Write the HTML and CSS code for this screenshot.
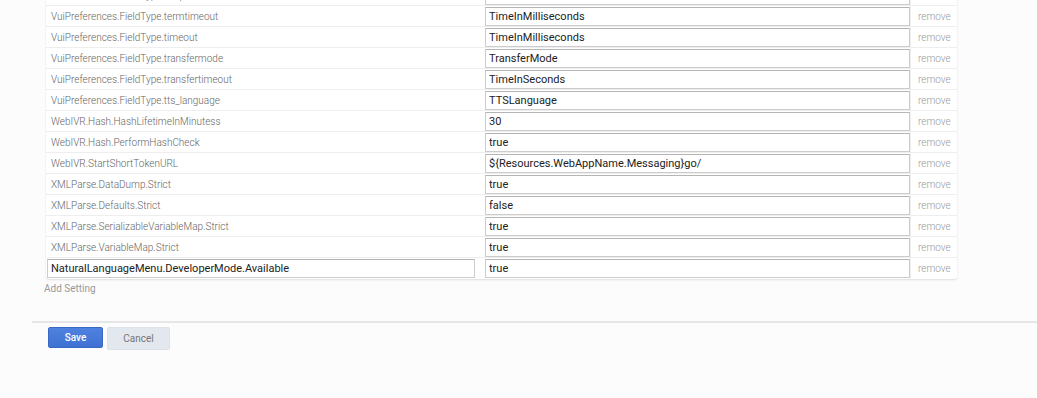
FILE: index.html
```html
<!DOCTYPE html>
<html lang="en">
<head>
    <meta charset="UTF-8">
    <title>Settings</title>
    <link rel="stylesheet" href="styles.css">
</head>
<body>
    <div class="page">
        <div class="settings">
            <div class="row"><div class="key">VuiPreferences.FieldType.telephone</div><div class="val"><input type="text" value="PhoneNumber"></div><div class="rm">remove</div></div>
            <div class="row"><div class="key">VuiPreferences.FieldType.termtimeout</div><div class="val"><input type="text" value="TimeInMilliseconds"></div><div class="rm">remove</div></div>
            <div class="row"><div class="key">VuiPreferences.FieldType.timeout</div><div class="val"><input type="text" value="TimeInMilliseconds"></div><div class="rm">remove</div></div>
            <div class="row"><div class="key">VuiPreferences.FieldType.transfermode</div><div class="val"><input type="text" value="TransferMode"></div><div class="rm">remove</div></div>
            <div class="row"><div class="key">VuiPreferences.FieldType.transfertimeout</div><div class="val"><input type="text" value="TimeInSeconds"></div><div class="rm">remove</div></div>
            <div class="row"><div class="key">VuiPreferences.FieldType.tts_language</div><div class="val"><input type="text" value="TTSLanguage"></div><div class="rm">remove</div></div>
            <div class="row"><div class="key">WebIVR.Hash.HashLifetimeInMinutess</div><div class="val"><input type="text" value="30"></div><div class="rm">remove</div></div>
            <div class="row"><div class="key">WebIVR.Hash.PerformHashCheck</div><div class="val"><input type="text" value="true"></div><div class="rm">remove</div></div>
            <div class="row"><div class="key">WebIVR.StartShortTokenURL</div><div class="val"><input type="text" value="${Resources.WebAppName.Messaging}go/"></div><div class="rm">remove</div></div>
            <div class="row"><div class="key">XMLParse.DataDump.Strict</div><div class="val"><input type="text" value="true"></div><div class="rm">remove</div></div>
            <div class="row"><div class="key">XMLParse.Defaults.Strict</div><div class="val"><input type="text" value="false"></div><div class="rm">remove</div></div>
            <div class="row"><div class="key">XMLParse.SerializableVariableMap.Strict</div><div class="val"><input type="text" value="true"></div><div class="rm">remove</div></div>
            <div class="row"><div class="key">XMLParse.VariableMap.Strict</div><div class="val"><input type="text" value="true"></div><div class="rm">remove</div></div>
            <div class="row last"><div class="key"><input type="text" value="NaturalLanguageMenu.DeveloperMode.Available"></div><div class="val"><input type="text" value="true"></div><div class="rm">remove</div></div>
        </div>
        <a class="add" href="#">Add Setting</a>
        <div class="footer">
            <button class="save">Save</button>
            <button class="cancel">Cancel</button>
        </div>
    </div>
</body>
</html>
```

FILE: styles.css
```css
body {
    margin: 0;
    background: #fcfcfc;
    font-family: Roboto, 'Liberation Sans', sans-serif;
    overflow: hidden;
}

.page {
    padding-left: 32px;
}

.settings {
    margin: -15px 0 0 14px;
    width: 911px;
    background: #fff;
    border-radius: 0 0 3px 3px;
    box-shadow: 0 1px 2px rgba(0, 0, 0, 0.12);
}

.row {
    display: grid;
    grid-template-columns: 439px 426px 46px;
    height: 21px;
    border-bottom: 1px solid #eee;
    box-sizing: border-box;
}

.row.last {
    border-bottom: none;
}

.key {
    padding: 1px 0 0 5px;
    font-size: 10px;
    font-weight: 300;
    color: #666;
    line-height: 20px;
    white-space: nowrap;
    overflow: hidden;
}

.val {
    border-right: 1px solid #eee;
}

input {
    display: block;
    box-sizing: border-box;
    width: 425px;
    height: 19px;
    margin-top: 1px;
    padding: 0 3px;
    border: 1px solid #ccc;
    border-top-color: #b5b5b5;
    font-family: Roboto, 'Liberation Sans', sans-serif;
    font-size: 11px;
    color: #222;
    background: #fff;
    outline: none;
}

.last .key {
    padding: 0 0 0 3px;
}

.key input {
    width: 428px;
    margin-left: -2px;
    margin-top: 1px;
    padding-left: 3px;
}

.rm {
    padding: 1px 0 0 7px;
    font-size: 10px;
    font-weight: 300;
    color: #999;
    line-height: 20px;
}

.add {
    display: block;
    margin: 3px 0 0 12px;
    font-size: 10px;
    color: #999;
    text-decoration: none;
    line-height: 14px;
}

.footer {
    margin-top: 25px;
    border-top: 2px solid #e6e6e6;
    padding: 4px 0 0 16px;
    display: flex;
    gap: 4px;
    align-items: flex-start;
}

button {
    font-family: Roboto, 'Liberation Sans', sans-serif;
    font-size: 10px;
    border-radius: 2px;
    cursor: pointer;
}

.save {
    width: 55px;
    height: 21px;
    background: linear-gradient(#4f82df, #3e71d2);
    border: 1px solid #3a68c4;
    color: #fff;
    font-weight: 500;
}

.cancel {
    width: 63px;
    height: 23px;
    background: #e3e7ee;
    border: 1px solid #dde1e8;
    color: #777;
}
```
